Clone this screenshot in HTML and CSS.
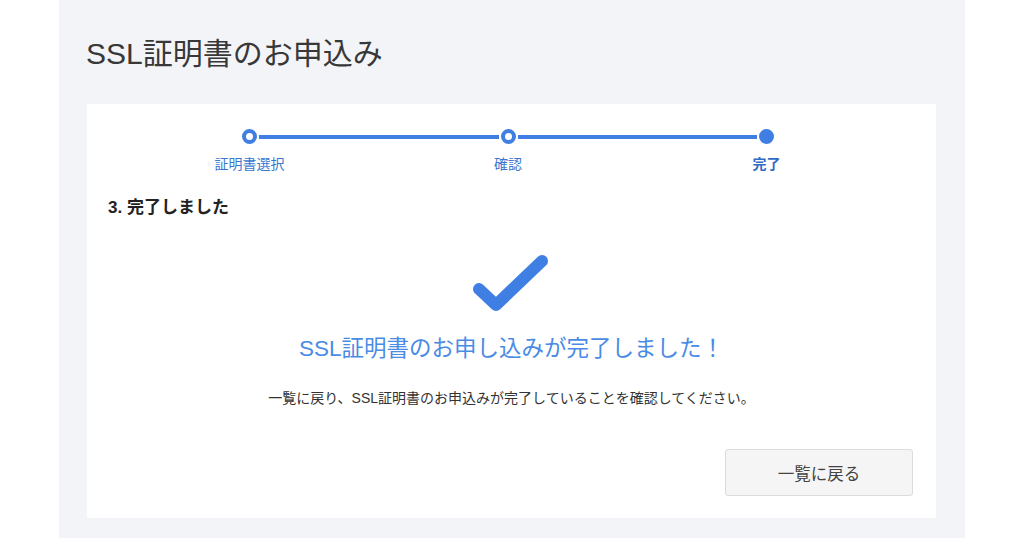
FILE: index.html
```html
<!DOCTYPE html>
<html lang="ja">
<head>
<meta charset="utf-8">
<link rel="stylesheet" href="styles.css">
</head>
<body>
<div class="panel">
  <h1 class="title">SSL証明書のお申込み</h1>
  <div class="card">
    <div class="stepper">
      <div class="step"><span class="dot"></span><span class="label">証明書選択</span></div>
      <span class="line"></span>
      <div class="step"><span class="dot"></span><span class="label">確認</span></div>
      <span class="line"></span>
      <div class="step current"><span class="dot"></span><span class="label">完了</span></div>
    </div>
    <h2 class="section">3. 完了しました</h2>
    <div class="done">
      <svg class="check" width="80" height="60" viewBox="0 0 80 60">
        <polyline points="7,34 24,50 70,6" fill="none" stroke="#3f7fe3" stroke-width="12" stroke-linecap="round" stroke-linejoin="round"/>
      </svg>
      <p class="done-title">SSL証明書のお申し込みが完了しました！</p>
      <p class="done-text">一覧に戻り、SSL証明書のお申込みが完了していることを確認してください。</p>
    </div>
    <div class="actions">
      <button class="btn" type="button">一覧に戻る</button>
    </div>
  </div>
</div>
</body>
</html>
```
FILE: styles.css
```css
* { box-sizing: border-box; }
html, body { margin: 0; padding: 0; background: #fff; }
body {
  font-family: "Liberation Sans", "Noto Sans CJK JP", sans-serif;
  color: #333;
  width: 1024px;
  height: 538px;
  overflow: hidden;
}
.panel {
  margin-left: 59px;
  width: 906px;
  height: 538px;
  background: #f3f4f8;
  padding: 34px 29px 0 27px;
}
.title {
  margin: 0;
  font-size: 30px;
  line-height: 40px;
  font-weight: 400;
  color: #383838;
  height: 70px;
}
.card {
  background: #fff;
  height: 414px;
  margin-left: 1px;
  padding: 25px 23px 0 21px;
}
.stepper {
  display: flex;
  align-items: flex-start;
  margin: 0 139px 0 134px;
}
.step {
  width: 15px;
  display: flex;
  flex-direction: column;
  align-items: center;
}
.dot {
  width: 15px;
  height: 15px;
  border-radius: 50%;
  border: 4px solid #3f7fe3;
  background: #fff;
}
.current .dot { background: #3f7fe3; }
.line {
  flex: 1;
  height: 4px;
  margin: 5.5px 2px 0;
  background: #3f7fe3;
}
.label {
  margin-top: 11px;
  font-size: 14px;
  line-height: 18px;
  color: #3a78d0;
  white-space: nowrap;
}
.current .label { font-weight: 700; color: #2f6cc4; }
.section {
  margin: 23px 0 0;
  font-size: 17px;
  line-height: 24px;
  font-weight: 700;
  color: #222;
}
.done {
  display: flex;
  flex-direction: column;
  align-items: center;
  padding-left: 2px;
}
.check { margin-top: 35px; display: block; }
.done-title {
  margin: 18px 0 0;
  font-size: 22.5px;
  line-height: 32px;
  color: #4a8be6;
}
.done-text {
  margin: 23px 0 0;
  font-size: 14px;
  line-height: 20px;
  color: #333;
}
.actions {
  display: flex;
  justify-content: flex-end;
  margin-top: 41px;
}
.btn {
  width: 188px;
  height: 47px;
  background: #f5f5f5;
  border: 1px solid #dcdcdc;
  border-radius: 3px;
  font-family: inherit;
  font-size: 16.5px;
  color: #444;
}
```
